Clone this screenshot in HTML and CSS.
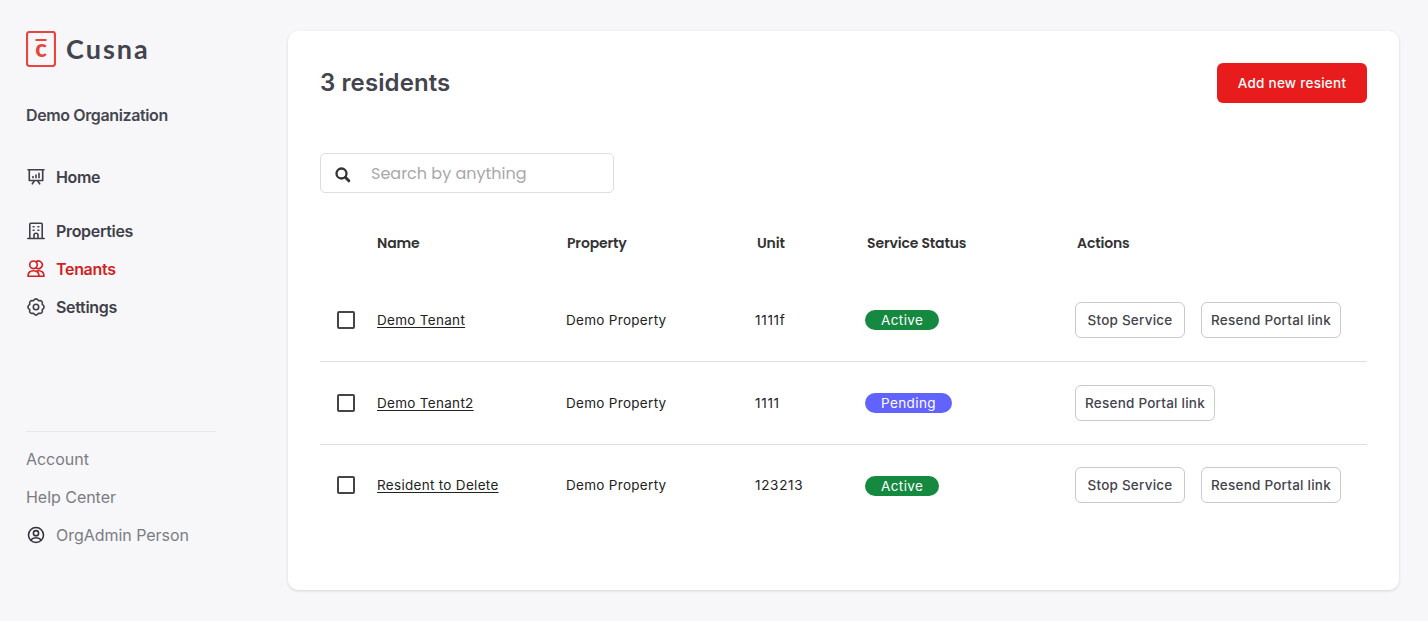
FILE: index.html
```html
<!DOCTYPE html>
<html lang="en">
<head>
<meta charset="utf-8">
<title>Cusna – Residents</title>
<link rel="stylesheet" href="styles.css">
</head>
<body>
<div class="app">
  <aside class="sidebar">
    <a class="brand">
      <svg class="brand-mark" width="30" height="36" viewBox="0 0 30 36">
        <rect x="1" y="1" width="28" height="34" rx="2.500" fill="none" stroke="#e8453f" stroke-width="2.200"/>
        <rect x="9.500" y="8" width="11" height="2" fill="#e8453f"/>
        <text x="15" y="26.300" text-anchor="middle" class="mark-letter">c</text>
      </svg>
      <span class="brand-name">Cusna</span>
    </a>
    <div class="org">Demo Organization</div>
    <nav class="nav">
      <a class="nav-item home">
        <svg class="icon" viewBox="0 0 20 20"><path d="M2 2.800h16M3.300 3v10.500h13.400V3M8.300 14l-2 2.800M11.700 14l2 2.800M7 10.700V9.500M10 10.700V8M13 10.700V6.200"/></svg>
        <span>Home</span>
      </a>
      <a class="nav-item">
        <svg class="icon" viewBox="0 0 20 20"><path d="M1.800 17.500h16.400M3.800 17.500V3.200a1 1 0 0 1 1-1h10.400a1 1 0 0 1 1 1v14.300M8 17.500v-3.300a2 2 0 0 1 4 0v3.300M7.200 5.800h.8M12 5.800h.8M7.200 9.200h.8M12 9.200h.8"/></svg>
        <span>Properties</span>
      </a>
      <a class="nav-item active">
        <svg class="icon" viewBox="0 0 20 20"><circle cx="7.500" cy="5.800" r="3.800"/><path d="M10 2.900a3.800 3.800 0 1 1 0 5.800M2 17.300c0-3.400 2-5.600 5.500-5.600s5.500 2.200 5.500 5.600zM10 12.300c.8-.4 1.600-.6 2.500-.6 3.500 0 5.500 2.200 5.500 5.600h-5"/></svg>
        <span>Tenants</span>
      </a>
      <a class="nav-item">
        <svg class="icon" viewBox="0 0 20 20"><circle cx="10" cy="10" r="2.700"/><path d="M7.400 3.720Q10 .1 12.600 3.720Q17 3 16.280 7.400Q19.900 10 16.280 12.600Q17 17 12.600 16.280Q10 19.900 7.400 16.280Q3 17 3.720 12.600Q.1 10 3.720 7.400Q3 3 7.400 3.720Z"/></svg>
        <span>Settings</span>
      </a>
    </nav>
    <div class="account">
      <a class="account-item">Account</a>
      <a class="account-item">Help Center</a>
      <a class="account-item">
        <svg class="icon user" viewBox="0 0 20 20"><circle cx="10" cy="10" r="7.500"/><circle cx="10" cy="8.200" r="2.600"/><path d="M4.800 15c1.100-1.500 3-2.200 5.200-2.200s4.100.7 5.200 2.200"/></svg>
        <span>OrgAdmin Person</span>
      </a>
    </div>
  </aside>
  <main class="panel">
    <header class="panel-head">
      <h1 class="title">3 residents</h1>
      <button class="add">Add new resient</button>
    </header>
    <label class="search">
      <svg width="16" height="16" viewBox="0 0 16 16" fill="none" stroke="#333"><circle cx="6.500" cy="6.500" r="5" stroke-width="2.300"/><path d="M10.300 10.300l3.500 3.500" stroke-width="3" stroke-linecap="round"/></svg>
      <input class="search-input" type="text" placeholder="Search by anything">
    </label>
    <div class="table">
      <div class="row head">
        <span></span><span>Name</span><span>Property</span><span>Unit</span><span>Service Status</span><span>Actions</span>
      </div>
      <div class="row">
        <span class="check"></span><a class="name">Demo Tenant</a><span class="prop">Demo Property</span><span class="unit">1111f</span>
        <span class="status"><span class="badge on">Active</span></span>
        <div class="actions"><button class="btn stop">Stop Service</button><button class="btn resend">Resend Portal link</button></div>
      </div>
      <div class="row">
        <span class="check"></span><a class="name">Demo Tenant2</a><span class="prop">Demo Property</span><span class="unit">1111</span>
        <span class="status"><span class="badge pending">Pending</span></span>
        <div class="actions"><button class="btn resend">Resend Portal link</button></div>
      </div>
      <div class="row last">
        <span class="check"></span><a class="name">Resident to Delete</a><span class="prop">Demo Property</span><span class="unit">123213</span>
        <span class="status"><span class="badge on">Active</span></span>
        <div class="actions"><button class="btn stop">Stop Service</button><button class="btn resend">Resend Portal link</button></div>
      </div>
    </div>
  </main>
</div>
</body>
</html>
```
FILE: styles.css
```css
* { box-sizing: border-box; }
body { margin: 0; background: #f7f7fa; font-family: Inter, "Liberation Sans", sans-serif; color: #222; }
.app { display: flex; height: 622px; overflow: hidden; border-bottom: 1px solid #fff; }

.sidebar { width: 288px; padding: 31px 0 0 26px; display: flex; flex-direction: column; }
.brand { display: flex; height: 36px; gap: 10px; align-items: center; }
.mark-letter { font: 900 24px Lato, sans-serif; fill: #e8453f; }
.brand-name { font: 700 27px/36px Lato, sans-serif; letter-spacing: 2px; color: #43444d; }
.org { margin-top: 36px; font-size: 16px; line-height: 24px; font-weight: 600; letter-spacing: -0.38px; color: #45464f; }
.nav { margin-top: 31px; }
.nav-item { display: flex; align-items: center; gap: 10px; height: 38px; font-size: 16px; font-weight: 600; letter-spacing: -0.32px; color: #3f4048; }
.nav-item.home { margin-bottom: 16px; }
.nav-item.active { color: #d21f1f; }
.icon { width: 20px; height: 20px; fill: none; stroke: currentColor; stroke-width: 1.6; stroke-linejoin: round; stroke-linecap: round; }
.account { width: 190px; margin-top: 105px; padding-top: 8px; border-top: 1px solid #e7e7ea; }
.account-item { display: flex; align-items: center; gap: 10px; height: 38px; font-size: 16px; letter-spacing: -0.03px; color: #7b7c83; }
.user { color: #33343a; stroke-width: 1.6; }

.panel { width: 1111px; height: 559px; margin-top: 31px; padding: 32px; background: #fff; border-radius: 10px; box-shadow: 0 1px 3px rgba(0, 0, 0, 0.14); }
.panel-head { display: flex; justify-content: space-between; height: 40px; }
.title { margin: 0; font-size: 24px; line-height: 40px; font-weight: 600; letter-spacing: 0.1px; color: #43444d; }
.add { width: 150px; height: 40px; border: 0; border-radius: 6px; background: #e81c1c; color: #fff; font: 500 13.5px Inter, sans-serif; letter-spacing: 0.27px; }
.search { display: flex; align-items: center; gap: 20px; width: 294px; height: 40px; margin-top: 50px; padding-left: 14px; border: 1px solid #dedede; border-radius: 5px; }
.search svg { margin-top: 3px; }
.search-input { width: 220px; padding: 0; border: 0; outline: 0; font: 400 16px Poppins, Inter, sans-serif; letter-spacing: 0; background: none; }
.search-input::placeholder { color: #a8a8a8; opacity: 1; }

.table { margin-top: 34px; }
.row { display: grid; grid-template-columns: 57px 189px 189px 110px 210px 1fr; align-items: center; height: 83px; border-bottom: 1px solid #dedede; font-size: 13.5px; letter-spacing: 0.3px; }
.row.head { height: 52px; padding-bottom: 20px; border: 0; grid-template-columns: 57px 190px 190px 110px 210px 1fr; font: 600 14px Poppins, Inter, sans-serif; letter-spacing: -0.14px; color: #333; }
.row.last { height: 80px; border: 0; }
.row.last .status { padding-top: 1px; }
.check { width: 18px; height: 18px; margin-left: 17px; border: 2px solid #444; border-radius: 2px; }
.name { text-decoration: underline; text-underline-offset: 2px; }
.unit { letter-spacing: 0.7px; }
.badge { display: block; width: max-content; height: 20px; padding: 0 16px; border-radius: 10px; color: #fff; line-height: 20px; letter-spacing: 0.4px; }
.on { background: #14893f; }
.pending { background: #6262ff; }
.actions { display: flex; gap: 16px; }
.btn { height: 36px; padding: 0; border: 1px solid #c9c9ce; border-radius: 6px; background: #fff; color: #43444d; font: 500 13.5px Inter, sans-serif; letter-spacing: 0.23px; }
.stop { width: 110px; }
.resend { width: 140px; }
```
